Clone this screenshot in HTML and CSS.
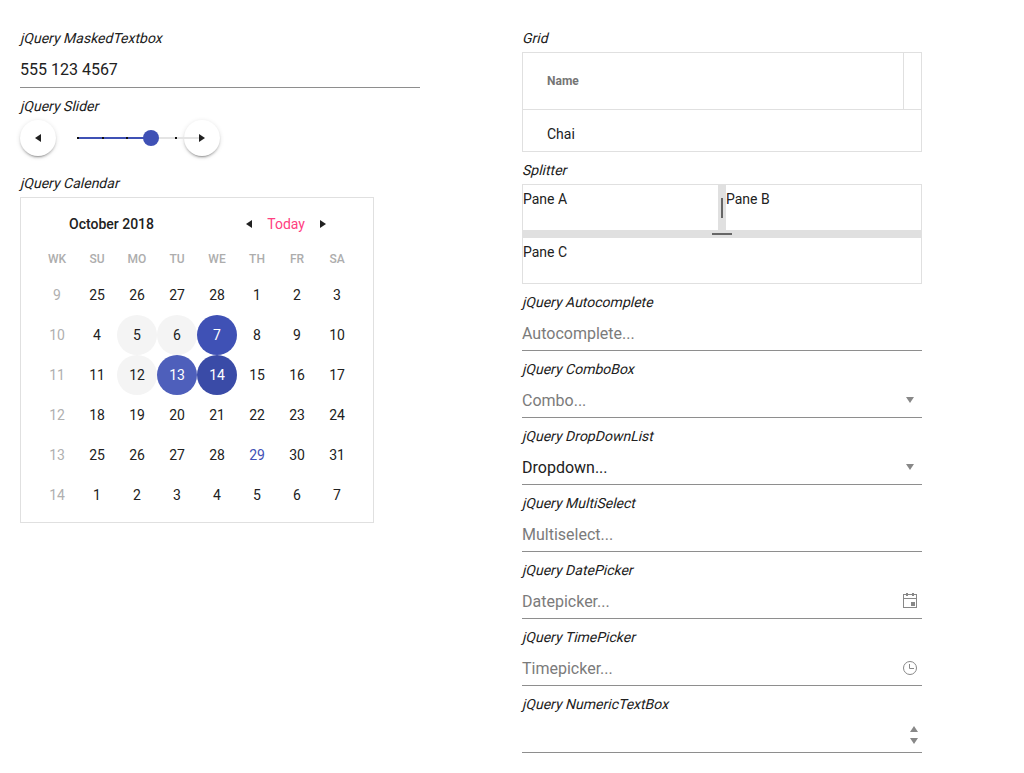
FILE: index.html
```html
<!DOCTYPE html>
<html lang="en">
<head>
<meta charset="utf-8">
<title>jQuery components</title>
<link rel="stylesheet" href="styles.css">
</head>
<body>
<main class="page">
  <section class="column">
    <div class="label">jQuery MaskedTextbox</div>
    <div class="field masked">555 123 4567</div>
    <div class="label">jQuery Slider</div>
    <div class="slider">
      <div class="round"><svg width="6" height="8" viewBox="0 0 6 8"><path d="M6 0v8L0 4z"/></svg></div>
      <div class="round"></div>
      <svg class="track" width="130" height="18" viewBox="0 0 130 18">
        <path fill="#e4e4e4" d="M0 8h125v2H0z"/>
        <path fill="#3f51b5" d="M0 8h74v2H0z"/>
        <path fill="#111" d="M0 8h2v2H0zM25 8h2v2h-2zM49 8h2v2h-2zM98 8h2v2h-2z"/>
        <circle cx="74" cy="9" r="8" fill="#3f51b5"/>
        <path fill="#212121" d="M122 5v8l6-4z"/>
      </svg>
    </div>
    <div class="label calendar-label">jQuery Calendar</div>
    <div class="calendar">
      <div class="calendar-header">
        <span class="title">October 2018</span>
        <div class="nav">
          <svg width="6" height="8" viewBox="0 0 6 8"><path d="M6 0v8L0 4z"/></svg>
          <span class="today-link">Today</span>
          <svg width="6" height="8" viewBox="0 0 6 8"><path d="M0 0v8l6-4z"/></svg>
        </div>
      </div>
      <div class="days weekdays"><span>WK</span><span>SU</span><span>MO</span><span>TU</span><span>WE</span><span>TH</span><span>FR</span><span>SA</span></div>
      <div class="days">
        <span class="week">9</span><span>25</span><span>26</span><span>27</span><span>28</span><span>1</span><span>2</span><span>3</span>
        <span class="week">10</span><span>4</span><span class="hover">5</span><span class="hover">6</span><span class="selected">7</span><span>8</span><span>9</span><span>10</span>
        <span class="week">11</span><span>11</span><span class="hover">12</span><span class="selected light">13</span><span class="selected dark">14</span><span>15</span><span>16</span><span>17</span>
        <span class="week">12</span><span>18</span><span>19</span><span>20</span><span>21</span><span>22</span><span>23</span><span>24</span>
        <span class="week">13</span><span>25</span><span>26</span><span>27</span><span>28</span><span class="current">29</span><span>30</span><span>31</span>
        <span class="week">14</span><span>1</span><span>2</span><span>3</span><span>4</span><span>5</span><span>6</span><span>7</span>
      </div>
    </div>
  </section>
  <section class="column">
    <div class="label">Grid</div>
    <div class="grid">
      <div class="grid-header"><div class="grid-name">Name</div></div>
      <div class="grid-row">Chai</div>
    </div>
    <div class="label">Splitter</div>
    <div class="splitter">
      <div class="panes">
        <div class="pane">Pane A</div>
        <div class="bar vertical"><i></i></div>
        <div class="pane">Pane B</div>
      </div>
      <div class="bar horizontal"><i></i></div>
      <div class="pane">Pane C</div>
    </div>
    <div class="label">jQuery Autocomplete</div>
    <div class="field hint">Autocomplete...</div>
    <div class="label">jQuery ComboBox</div>
    <div class="field hint">Combo...<svg class="caret" width="8" height="6" viewBox="0 0 8 6"><path d="M0 0h8L4 6z"/></svg></div>
    <div class="label">jQuery DropDownList</div>
    <div class="field">Dropdown...<svg class="caret" width="8" height="6" viewBox="0 0 8 6"><path d="M0 0h8L4 6z"/></svg></div>
    <div class="label">jQuery MultiSelect</div>
    <div class="field hint">Multiselect...</div>
    <div class="label">jQuery DatePicker</div>
    <div class="field hint">Datepicker...<svg class="picker date" width="14" height="15" viewBox="0 0 14 15"><path fill-rule="evenodd" d="M0 1h3V0h2v1h4V0h2v1h3v14H0zM1 2v3h12V2h-2v1H9V2H5v1H3V2zM1 6v8h12V6zM8 9h4v4H8z"/></svg></div>
    <div class="label">jQuery TimePicker</div>
    <div class="field hint">Timepicker...<svg class="picker" width="14" height="14" viewBox="0 0 14 14"><g fill="none" stroke="#888"><circle cx="7" cy="7" r="6.5"/><path d="M6.500 3v4.500h4.500"/></g></svg></div>
    <div class="label">jQuery NumericTextBox</div>
    <div class="field"><svg class="spin" width="8" height="18" viewBox="0 0 8 18"><path d="M0 6h8L4 0zM0 12h8l-4 6z"/></svg></div>
  </section>
</main>
</body>
</html>
```

FILE: styles.css
```css
* { box-sizing: border-box; }
body {
  margin: 0;
  background: #fff;
  color: #212121;
  font: 14px/28px Roboto, sans-serif;
  overflow: hidden;
}
svg { display: block; flex: none; fill: #212121; }
.page { display: flex; gap: 102px; padding: 24px 20px 0; }
.column { width: 400px; flex: none; }
/* Slanted regular weight, pivoting on the text baseline */
.label { height: 28px; transform: skewX(-14deg); transform-origin: 0 19px; }
.field {
  display: flex;
  align-items: center;
  justify-content: space-between;
  height: 35px;
  margin-bottom: 4px;
  padding-top: 2px;
  border-bottom: 1px solid #8e8e8e;
  font-size: 16px;
}
.masked { height: 36px; padding-top: 0; }
.hint { color: #7b7b7b; }
.field svg { fill: #888; margin-bottom: 2px; }
.caret { margin-right: 8px; }
.picker { margin-right: 5px; }
.field .date { margin-bottom: 3px; }
.spin { margin: 0 4px 0 auto; }

.slider {
  position: relative;
  display: flex;
  justify-content: space-between;
  width: 200px;
  height: 49px;
}
.round {
  display: grid;
  place-items: center;
  width: 36px;
  height: 36px;
  border-radius: 50%;
  background: #fff;
  box-shadow: 0 3px 1px -2px rgba(0,0,0,.2), 0 2px 2px rgba(0,0,0,.14), 0 1px 5px rgba(0,0,0,.12);
}
.track { position: absolute; left: 57px; top: 9px; }

.calendar { width: 354px; height: 326px; padding: 0 16px; border: 1px solid #e0e0e0; }
.calendar-header {
  display: flex;
  align-items: center;
  justify-content: space-between;
  height: 45px;
  padding: 7px 31px 0 32px;
}
.title { font-weight: 500; }
.nav { display: flex; align-items: center; gap: 15px; }
.today-link { color: #ff4081; }
.days { display: grid; grid-template-columns: repeat(8, 40px); grid-auto-rows: 40px; line-height: 40px; text-align: center; }
.days span { border-radius: 50%; }
.weekdays { grid-auto-rows: 32px; line-height: 32px; font-size: 12px; font-weight: 500; color: #adadad; }
.days .week { color: #b0b0b0; }
.hover { background: #f4f4f4; }
.selected { background: #3f51b5; color: #fff; }
.light { background: #4e5fbb; }
.dark { background: #3a4ba7; }
.current { color: #3f51b5; }

.grid { height: 100px; margin-bottom: 4px; border: 1px solid #e0e0e0; }
.grid-header { display: flex; height: 57px; padding-right: 17px; border-bottom: 1px solid #e0e0e0; }
.grid-name { flex: 1; padding-left: 24px; border-right: 1px solid #e0e0e0; line-height: 56px; font-size: 12px; font-weight: 700; color: #757575; }
.grid-row { padding-left: 24px; line-height: 48px; height: 41px; }

.splitter { display: flex; flex-direction: column; height: 100px; margin-bottom: 4px; border: 1px solid #e0e0e0; }
.panes { display: flex; height: 45px; }
.pane { flex: 1; line-height: 28px; }
.bar { display: grid; place-items: center; flex: none; background: #e0e0e0; }
.bar i { background: #666; }
.vertical { width: 8px; }
.vertical i { width: 2px; height: 20px; }
.horizontal { height: 8px; }
.horizontal i { width: 20px; height: 2px; }
```
